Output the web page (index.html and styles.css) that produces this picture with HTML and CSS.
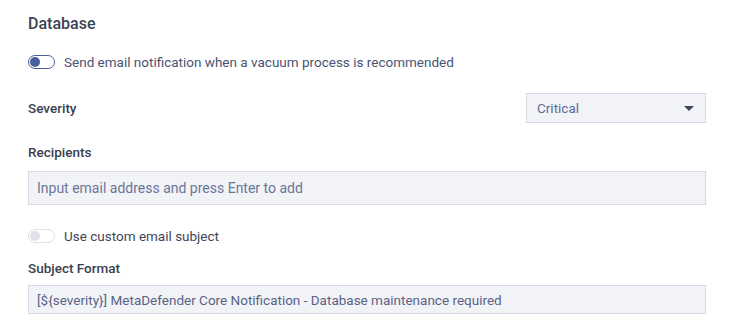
FILE: index.html
```html
<!DOCTYPE html>
<html lang="en">
<head>
  <meta charset="UTF-8">
  <title>Database</title>
  <link rel="stylesheet" href="styles.css">
</head>
<body>
  <div class="panel">
    <h3 class="section-title">Database</h3>

    <label class="switch-row">
      <span class="switch on"><span class="knob"></span></span>
      <span class="switch-text">Send email notification when a vacuum process is recommended</span>
    </label>

    <div class="field-row">
      <div class="label">Severity</div>
      <div class="select">
        <span>Critical</span>
        <span class="caret"></span>
      </div>
    </div>

    <div class="field">
      <div class="label">Recipients</div>
      <div class="input tall placeholder">Input email address and press Enter to add</div>
    </div>

    <label class="switch-row small">
      <span class="switch disabled"><span class="knob"></span></span>
      <span class="switch-text">Use custom email subject</span>
    </label>

    <div class="field subject">
      <div class="label">Subject Format</div>
      <div class="input readonly">[${severity}] MetaDefender Core Notification - Database maintenance required</div>
    </div>
  </div>
</body>
</html>
```

FILE: styles.css
```css
body {
  margin: 0;
  background: #fff;
  font-family: Roboto, "Liberation Sans", sans-serif;
  font-size: 13.5px;
  color: #3a3f50;
}

.panel {
  width: 678px;
  padding: 14px 23px 0 28px;
}

.section-title {
  margin: 0;
  font-size: 16px;
  font-weight: 500;
  color: #3b4254;
  line-height: 20px;
}

/* Switch */
.switch-row {
  display: flex;
  align-items: center;
  gap: 9px;
  margin-top: 18px;
  height: 20px;
}

.switch-row.small {
  margin-top: 21px;
}

.switch {
  position: relative;
  width: 25px;
  height: 12px;
  border: 1px solid #4b5f9e;
  border-radius: 8px;
  box-sizing: content-box;
}

.switch .knob {
  position: absolute;
  top: 1px;
  left: 1px;
  width: 10px;
  height: 10px;
  border-radius: 50%;
  background: #4b5f9e;
}

.switch.disabled {
  border-color: #dfe2ea;
}

.switch.disabled .knob {
  background: #dfe2ea;
}

.switch-text {
  color: #4a5373;
}

.switch-row.small .switch-text {
  color: #3f4558;
}

/* Fields */
.label {
  font-weight: 500;
  color: #3a3f50;
  line-height: 20px;
}

.field-row {
  display: flex;
  justify-content: space-between;
  align-items: center;
  margin-top: 21px;
}

.field {
  margin-top: 19px;
}

.field.subject {
  margin-top: 12px;
}

.select {
  width: 158px;
  height: 28px;
  padding: 0 10px;
  display: flex;
  align-items: center;
  justify-content: space-between;
  background: #f2f3f7;
  border: 1px solid #d5dae5;
  color: #5e6a99;
}

.caret {
  width: 0;
  height: 0;
  border-left: 5px solid transparent;
  border-right: 5px solid transparent;
  border-top: 5px solid #3f4659;
  margin-right: 1px;
}

.input {
  margin-top: 7px;
  height: 27px;
  padding: 0 8px;
  display: flex;
  align-items: center;
  background: #f2f3f7;
  border: 1px solid #d5dae5;
}

.input.tall {
  margin-top: 9px;
  height: 32px;
}

.input.placeholder {
  color: #6b7599;
  font-size: 14px;
}

.input.readonly {
  color: #5a6386;
}
```
